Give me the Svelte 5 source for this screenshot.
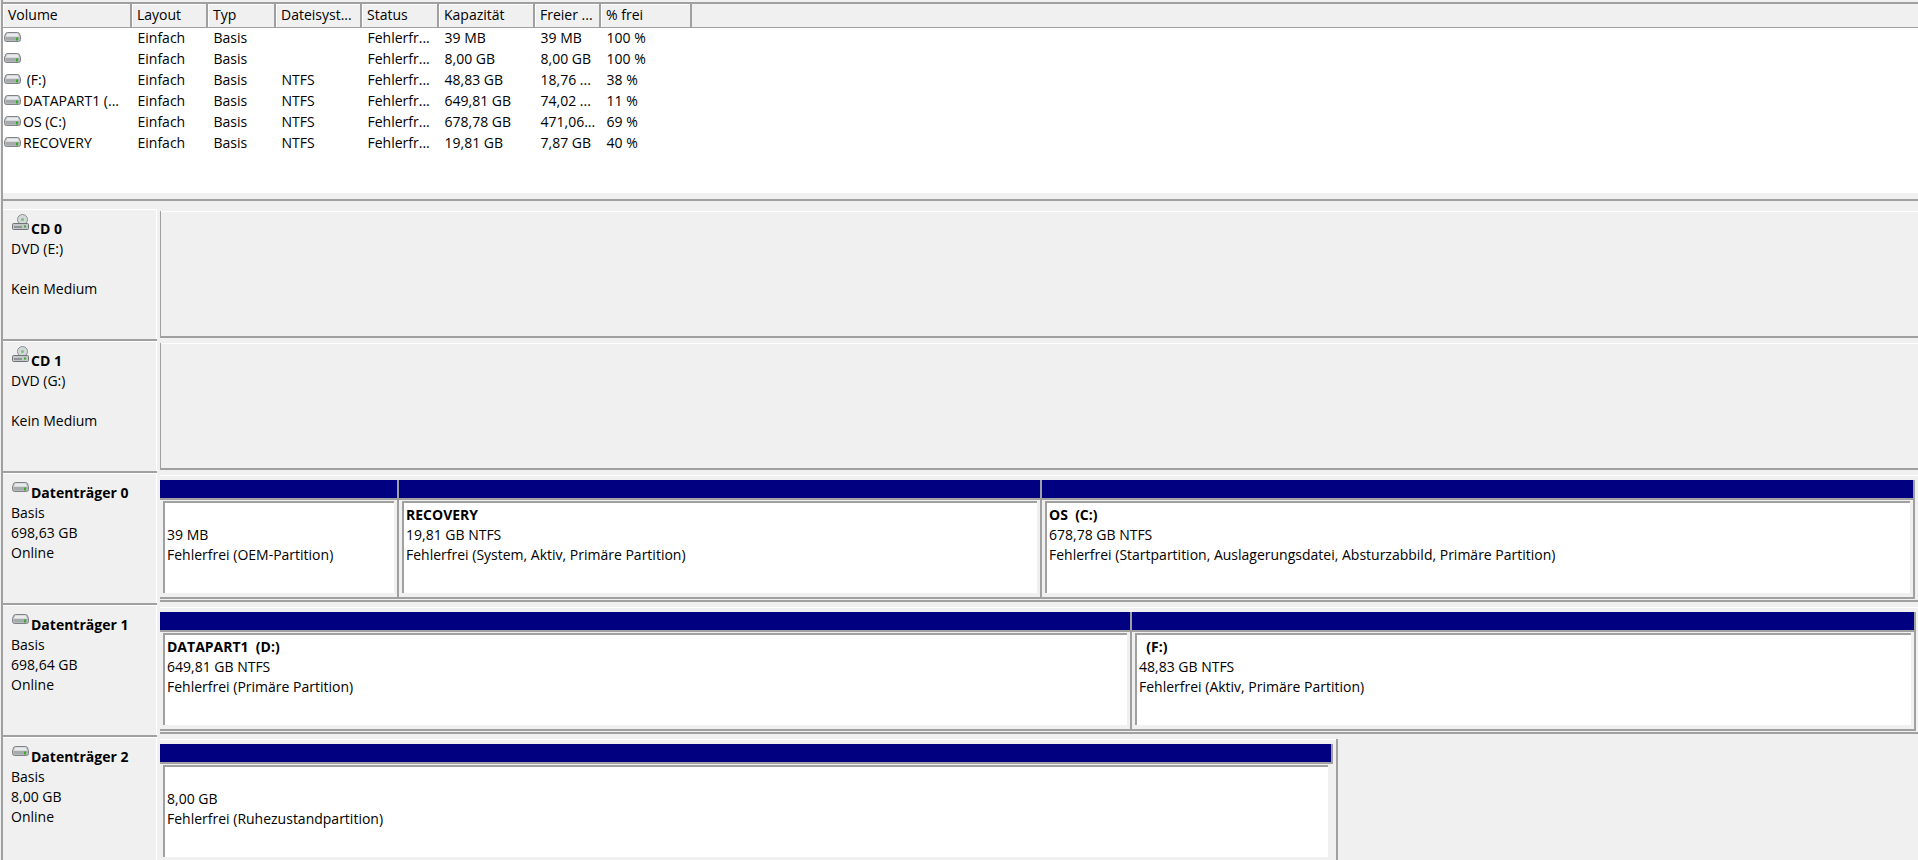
<script>
  const columns = [
    { label: "Volume", width: 129 },
    { label: "Layout", width: 76 },
    { label: "Typ", width: 68 },
    { label: "Dateisyst...", width: 86 },
    { label: "Status", width: 77 },
    { label: "Kapazität", width: 96 },
    { label: "Freier ...", width: 66 },
    { label: "% frei", width: 91 }
  ];

  const volumes = [
    ["", "Einfach", "Basis", "", "Fehlerfr...", "39 MB", "39 MB", "100 %"],
    ["", "Einfach", "Basis", "", "Fehlerfr...", "8,00 GB", "8,00 GB", "100 %"],
    [" (F:)", "Einfach", "Basis", "NTFS", "Fehlerfr...", "48,83 GB", "18,76 ...", "38 %"],
    ["DATAPART1 (...", "Einfach", "Basis", "NTFS", "Fehlerfr...", "649,81 GB", "74,02 ...", "11 %"],
    ["OS (C:)", "Einfach", "Basis", "NTFS", "Fehlerfr...", "678,78 GB", "471,06...", "69 %"],
    ["RECOVERY", "Einfach", "Basis", "NTFS", "Fehlerfr...", "19,81 GB", "7,87 GB", "40 %"]
  ];

  const template = columns.map((c) => c.width + "px").join(" ");

  const drives = [
    { name: "CD 0", cd: true, lines: ["DVD (E:)", "", "Kein Medium"] },
    { name: "CD 1", cd: true, lines: ["DVD (G:)", "", "Kein Medium"] },
    {
      name: "Datenträger 0",
      lines: ["Basis", "698,63 GB", "Online"],
      parts: [
        { width: 239, title: "", size: "39 MB", state: "Fehlerfrei (OEM-Partition)" },
        { width: 643, title: "RECOVERY", size: "19,81 GB NTFS", state: "Fehlerfrei (System, Aktiv, Primäre Partition)" },
        { width: 873, title: "OS  (C:)", size: "678,78 GB NTFS", state: "Fehlerfrei (Startpartition, Auslagerungsdatei, Absturzabbild, Primäre Partition)" }
      ]
    },
    {
      name: "Datenträger 1",
      lines: ["Basis", "698,64 GB", "Online"],
      parts: [
        { width: 972, title: "DATAPART1  (D:)", size: "649,81 GB NTFS", state: "Fehlerfrei (Primäre Partition)" },
        { width: 784, title: "  (F:)", size: "48,83 GB NTFS", state: "Fehlerfrei (Aktiv, Primäre Partition)" }
      ]
    },
    {
      name: "Datenträger 2",
      short: true,
      lines: ["Basis", "8,00 GB", "Online"],
      parts: [{ width: 1176, title: "", size: "8,00 GB", state: "Fehlerfrei (Ruhezustandpartition)" }]
    }
  ];
</script>

{#snippet diskIcon()}
  <svg class="disk-icon" width="17" height="10" viewBox="0 0 17 10">
    <path d="M3.5 .5h10a2 2 0 0 1 2 1.5l1 2.500v3a2 2 0 0 1-2 2h-12a2 2 0 0 1-2-2v-3l1-2.500a2 2 0 0 1 2-1.500z" fill="#c4c7c9" stroke="#7f8386" />
    <path d="M3.500 1.500h10l1.500 3h-13z" fill="#e9ebec" />
    <rect x="1.500" y="5" width="14" height="3.500" fill="#a6aaad" />
    <rect x="12" y="5.500" width="2" height="3" fill="#35b026" />
  </svg>
{/snippet}

{#snippet cdIcon()}
  <svg class="cd-icon" width="17" height="17" viewBox="0 0 17 17">
    <circle cx="10.500" cy="5.500" r="5" fill="#d3d8da" stroke="#8b9093" />
    <circle cx="10.500" cy="5.500" r="1.500" fill="#7fbf78" />
    <path d="M1.500 9.500h14a1 1 0 0 1 1 1v4a1 1 0 0 1-1 1h-14a1 1 0 0 1-1-1v-4a1 1 0 0 1 1-1z" fill="#c4c7c9" stroke="#6f7376" />
    <rect x="2" y="12.500" width="8" height="1" fill="#5e6265" />
    <rect x="12" y="11.500" width="2" height="2" fill="#35b026" />
  </svg>
{/snippet}

<div class="window">
  <section class="list">
    <div class="head" style="grid-template-columns: {template}">
      {#each columns as col}
        <div class="head-cell">{col.label}</div>
      {/each}
    </div>
    {#each volumes as row}
      <div class="row" style="grid-template-columns: {template}">
        {#each row as cell, i}
          {#if i === 0}
            <div class="cell name">{@render diskIcon()}<span>{cell}</span></div>
          {:else}
            <div class="cell">{cell}</div>
          {/if}
        {/each}
      </div>
    {/each}
  </section>

  <section class="drives">
    {#each drives as drive}
      <div class="drive">
        <div class="label">
          <div class="label-title">
            {#if drive.cd}{@render cdIcon()}{:else}{@render diskIcon()}{/if}
            <b>{drive.name}</b>
          </div>
          {#each drive.lines as line}
            <div class="line">{line}</div>
          {/each}
        </div>
        <div class="bar" class:empty={!drive.parts} class:short={drive.short}>
          {#if drive.parts}
            {#each drive.parts as part}
              <div class="part" style="width: {part.width}px">
                <div class="part-head"></div>
                <div class="part-gap">
                  <div class="part-body">
                    <div class="line"><b>{part.title}</b></div>
                    <div class="line">{part.size}</div>
                    <div class="line">{part.state}</div>
                  </div>
                </div>
              </div>
            {/each}
          {/if}
        </div>
      </div>
    {/each}
  </section>
</div>

<style>
  :global(body) {
    margin: 0;
    background: #f0f0f0;
    overflow: hidden;
  }

  .window {
    width: 1917px;
    height: 860px;
    margin-left: 1px;
    padding-top: 2px;
    box-sizing: border-box;
    overflow: hidden;
    font-family: "Open Sans", sans-serif;
    font-size: 14px;
    line-height: 20px;
    color: #000;
    border-left: 2px solid #a0a0a0;
  }

  .list {
    height: 199px;
    box-sizing: border-box;
    background: #fff;
    border-top: 2px solid #a0a0a0;
    border-bottom: 2px solid #a0a0a0;
    box-shadow: inset 0 -6px 0 #f0f0f0;
  }

  .head {
    display: grid;
    height: 23px;
    background: #f0f0f0;
    border-bottom: 1px solid #a0a0a0;
  }

  .head-cell {
    padding: 1px 0 0 5px;
    border-right: 2px solid #a0a0a0;
    box-shadow: inset 1px 1px 0 #fff;
    overflow: hidden;
  }

  .row {
    display: grid;
    height: 21px;
  }

  .cell {
    padding-left: 5.5px;
    line-height: 19px;
    overflow: hidden;
  }

  .name {
    display: flex;
    align-items: flex-start;
    padding-left: 1px;
    white-space: pre;
  }

  .name .disk-icon {
    margin: 4px 2px 0 0;
  }

  .drives {
    margin-top: 6px;
  }

  .drive {
    display: flex;
    height: 132px;
  }

  .label {
    width: 154px;
    height: 132px;
    box-sizing: border-box;
    padding: 10px 0 0 8px;
    border-top: 2px solid #a0a0a0;
    box-shadow: inset 0 1px 0 #fff, inset -1px 0 0 #fff;
  }

  .drive:first-child .label {
    border-top-color: #f0f0f0;
  }

  .label-title {
    display: flex;
    align-items: flex-end;
    gap: 2px;
    height: 20px;
    margin-left: 1px;
  }

  .disk-icon {
    flex: none;
    margin-bottom: 11px;
  }

  .cd-icon {
    flex: none;
    margin-bottom: 8px;
  }

  .line {
    height: 20px;
    white-space: pre;
  }

  .bar {
    display: flex;
    flex: 1;
    align-items: flex-start;
    margin: 4px 0 0 3px;
    height: 127px;
    box-sizing: border-box;
    padding-top: 5px;
    border-bottom: 2px solid #a0a0a0;
    box-shadow: inset 0 1px 0 #fff;
  }

  .bar.empty {
    border-left: 1px solid #a0a0a0;
  }

  .bar.short {
    flex: none;
    width: 1178px;
    border-right: 2px solid #a0a0a0;
  }

  .part {
    box-sizing: border-box;
    height: 119px;
    border-right: 2px solid #a0a0a0;
    border-bottom: 2px solid #a0a0a0;
  }

  .part-head {
    height: 18px;
    background: #000080;
    border-bottom: 2px solid #a0a0a0;
  }

  .part-gap {
    padding: 1px 3px 3px;
  }

  .part-body {
    height: 92px;
    padding: 2px 0 0 2px;
    background: #fff;
    border-top: 2px solid #a0a0a0;
    border-left: 2px solid #a0a0a0;
    box-sizing: border-box;
  }

  .short .part {
    border-right: none;
  }

  .short .part-head {
    margin-right: 3px;
    border-right: 2px solid #a0a0a0;
  }

  .short .part-gap {
    padding-right: 8px;
  }
</style>
